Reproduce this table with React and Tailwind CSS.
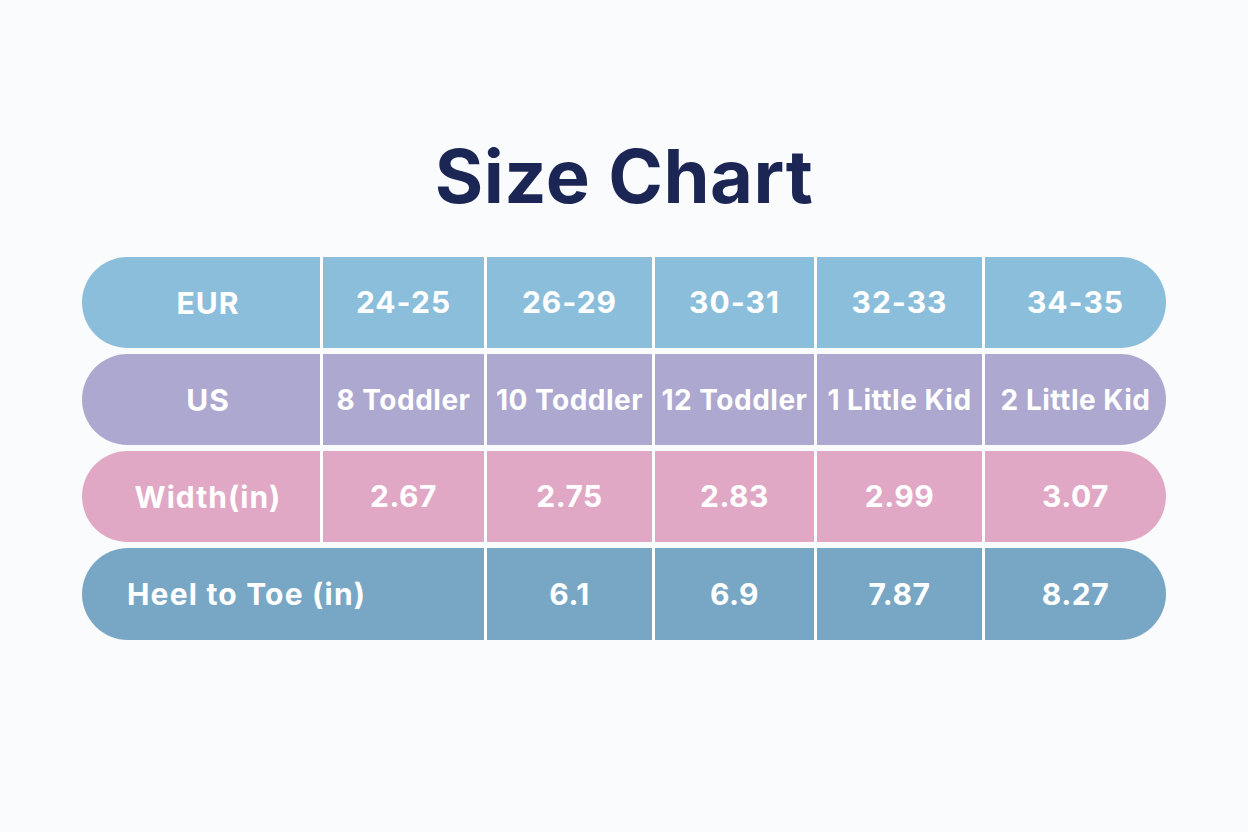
import React from "react";

const rows = [
  { bg: "bg-[#8bbedb]", cells: ["EUR", "24-25", "26-29", "30-31", "32-33", "34-35"], size: "text-[30px] tracking-[1px]" },
  { bg: "bg-[#ada8cf]", cells: ["US", "8 Toddler", "10 Toddler", "12 Toddler", "1 Little Kid", "2 Little Kid"], size: "text-[28px] tracking-[0.5px]" },
  { bg: "bg-[#e1a8c5]", cells: ["Width(in)", "2.67", "2.75", "2.83", "2.99", "3.07"], size: "text-[30px] tracking-[0.5px]" },
];

export default function App() {
  return (
    <div
      className="w-[1248px] h-[832px] bg-[#fafbfc] flex flex-col items-center"
      style={{ fontFamily: "Inter, 'Noto Sans', sans-serif" }}
    >
      <h1 className="mt-[132px] text-[74px] leading-[88px] font-bold text-[#1c2654] tracking-[0.5px]">
        Size Chart
      </h1>
      <div className="mt-[37px] w-[1084px] flex flex-col gap-[6px]">
        {rows.map((r, i) => (
          <div
            key={i}
            className="h-[91px] rounded-full overflow-hidden bg-white grid grid-cols-[238px_161px_165px_159px_165px_1fr] gap-x-[3px]"
          >
            {r.cells.map((c, j) => (
              <div
                key={j}
                className={`${r.bg} flex items-center justify-center text-white font-bold ${j === 0 ? "text-[30px] tracking-[1px] pl-[14px] pt-[2px]" : r.size} whitespace-nowrap`}
              >
                {c}
              </div>
            ))}
          </div>
        ))}
        <div className="h-[92px] rounded-full overflow-hidden bg-white grid grid-cols-[238px_161px_165px_159px_165px_1fr] gap-x-[3px]">
          <div className="col-span-2 bg-[#78a7c6] flex items-center pl-[45px] text-white font-bold text-[30px] tracking-[1.2px] whitespace-nowrap">
            Heel to Toe (in)
          </div>
          {["6.1", "6.9", "7.87", "8.27"].map((c, j) => (
            <div key={j} className="bg-[#78a7c6] flex items-center justify-center text-white font-bold text-[30px] tracking-[0.5px]">
              {c}
            </div>
          ))}
        </div>
      </div>
    </div>
  );
}
